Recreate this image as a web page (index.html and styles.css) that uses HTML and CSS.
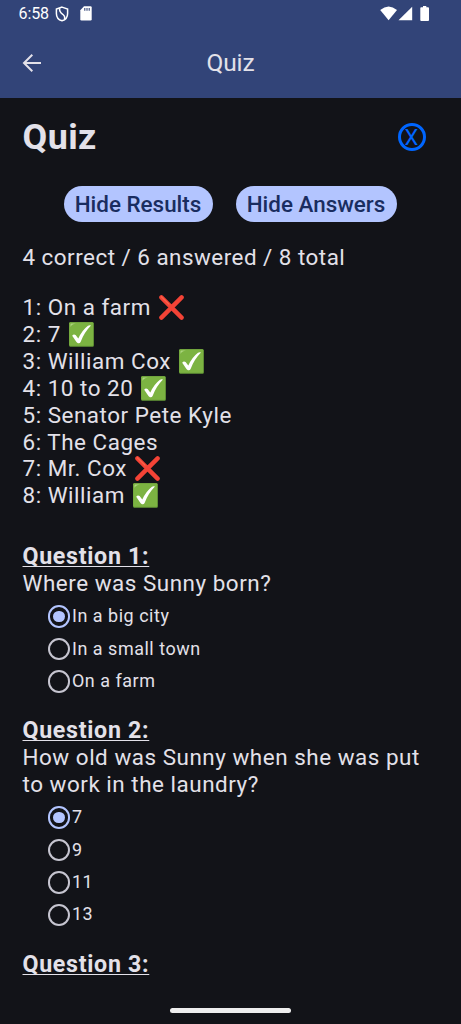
FILE: index.html
```html
<!DOCTYPE html>
<html lang="en">
<head>
<meta charset="utf-8">
<title>Quiz</title>
<link rel="stylesheet" href="styles.css">
</head>
<body>
<svg class="defs" width="0" height="0" aria-hidden="true">
  <symbol id="cross" viewBox="0 0 25 25"><path d="M2.4 2.4 22.6 22.6M22.6 2.4 2.4 22.6" stroke="#f44336" stroke-width="4.4" stroke-linecap="round"/><path d="M2.3 1.8 10 9.3" stroke="#ff7555" stroke-width="1" stroke-linecap="round"/></symbol>
  <symbol id="check" viewBox="0 0 25 25"><rect x=".2" y=".2" width="24.6" height="24.6" rx="1.2" fill="#689f38"/><rect x=".2" y=".2" width="24" height="23.6" rx="1.2" fill="#7cb342"/><path d="M1.5 5V2.5Q1.5 1.5 2.5 1.5H7Q2.5 2 1.5 5Z" fill="#aed581"/><path d="M3.2 13.8Q4.6 11.6 6.6 13L9.3 16.5Q13 8.2 19 3.7Q20.5 2.8 22 3.5Q15 10.5 11.6 20Q10.8 21.6 9 21.2Q7.8 21 7.1 19.6Z" fill="#fff"/></symbol>
</svg>
<header class="header">
  <div class="status">
    <span class="time">6:58</span>
    <svg class="shield" viewBox="0 0 14 16" fill="none" stroke="#fff" stroke-width="1.5"><path d="M7 1.1 12.6 3V7.4C12.6 11 10.4 13.8 7 14.8C3.6 13.8 1.4 11 1.4 7.4V3Z"/><path d="M4.8 2.2C3.7 5.5 6 7 8 8.5S10.2 11 9.6 13.4"/></svg>
    <svg class="sd" viewBox="0 0 12 15"><path d="M4 .3H10.5Q11.7.3 11.7 1.5V13.3Q11.7 14.5 10.5 14.5H1.5Q.3 14.5.3 13.3V4.2Z" fill="#fff"/><path d="M4.8 2.1V4.8M7 2.1V4.8M9.2 2.1V4.8" stroke="#324478" stroke-width="1.1"/></svg>
    <svg class="signals" viewBox="0 0 50 16" fill="#fff"><path d="M.2 4Q8.6-3.2 17 4L8.6 14.2Z"/><path d="M18.5 14.2 32.2.7V14.2Z"/><path d="M43 0H46.3V1.2H48.1Q49 1.2 49 2.2V14Q49 15 48.1 15H41.2Q40.3 15 40.3 14V2.2Q40.3 1.2 41.2 1.2H43Z"/></svg>
  </div>
  <div class="bar">
    <svg class="back" viewBox="0 0 20 20" fill="none" stroke="#e3e1e9" stroke-width="2"><path d="M19 10H2.2M10.3 1.8 2 10 10.3 18.2"/></svg>
    <span class="bar-title">Quiz</span>
  </div>
</header>
<main class="content">
  <div class="title-row">
    <h1 class="title">Quiz</h1>
    <span class="close">X</span>
  </div>
  <div class="actions"><button class="pill">Hide Results</button><button class="pill answers">Hide Answers</button></div>
  <p class="score">4 correct / 6 answered / 8 total</p>
  <div class="results">
    <div>1: On a farm <svg class="mark"><use href="#cross"/></svg></div>
    <div>2: 7 <svg class="mark"><use href="#check"/></svg></div>
    <div>3: William Cox <svg class="mark"><use href="#check"/></svg></div>
    <div>4: 10 to 20 <svg class="mark"><use href="#check"/></svg></div>
    <div>5: Senator Pete Kyle</div>
    <div>6: The Cages</div>
    <div>7: Mr. Cox <svg class="mark"><use href="#cross"/></svg></div>
    <div>8: William <svg class="mark"><use href="#check"/></svg></div>
  </div>
  <section class="question">
    <h2 class="q-title">Question 1:</h2>
    <p class="q-text">Where was Sunny born?</p>
    <div class="options">
      <div class="option"><i class="radio on"></i>In a big city</div>
      <div class="option"><i class="radio"></i>In a small town</div>
      <div class="option"><i class="radio"></i>On a farm</div>
    </div>
  </section>
  <section class="question">
    <h2 class="q-title">Question 2:</h2>
    <p class="q-text">How old was Sunny when she was put<br>to work in the laundry?</p>
    <div class="options">
      <div class="option"><i class="radio on"></i>7</div>
      <div class="option"><i class="radio"></i>9</div>
      <div class="option"><i class="radio"></i>11</div>
      <div class="option"><i class="radio"></i>13</div>
    </div>
  </section>
  <section class="question">
    <h2 class="q-title">Question 3:</h2>
  </section>
</main>
<div class="home"></div>
</body>
</html>
```
FILE: styles.css
```css
* { box-sizing: border-box; margin: 0; padding: 0; }
body {
  position: relative;
  width: 461px;
  height: 1024px;
  overflow: hidden;
  background: #121318;
  color: #e3e1e9;
  font: 22.43px/26.9px Roboto, sans-serif;
  letter-spacing: 0.53px;
}
.defs { position: absolute; }
.header { height: 98px; background: #324478; }
.status {
  display: flex;
  align-items: center;
  height: 27px;
  padding: 0 31px 0 18.5px;
  color: #fff;
}
.time { width: 36px; padding-top: 1px; font-size: 16px; letter-spacing: -0.1px; }
.shield { width: 14px; height: 16px; }
.sd { width: 12px; height: 15px; margin-left: 11.5px; }
.signals { width: 50px; height: 16px; margin-left: auto; }
.bar {
  display: grid;
  grid-template-columns: 1fr auto 1fr;
  align-items: center;
  height: 71px;
  padding: 0 22px;
}
.back { width: 20px; height: 20px; }
.bar-title { padding-top: 2px; font-size: 24.5px; letter-spacing: -0.1px; }
.content { padding: 0 22.5px; }
.title-row {
  display: flex;
  justify-content: space-between;
  align-items: center;
  height: 77px;
  padding-right: 13px;
}
.title { padding-top: 2px; font-size: 35.9px; line-height: 43px; letter-spacing: 0.4px; }
.close {
  width: 28px;
  height: 28px;
  margin-top: 1px;
  border: 3px solid #0066ff;
  border-radius: 50%;
  color: #0066ff;
  font-size: 22px;
  line-height: 23px;
  letter-spacing: 0;
  text-align: center;
}
.actions { display: flex; justify-content: center; gap: 22.5px; padding-top: 11px; }
.pill {
  width: 149.5px;
  height: 36px;
  padding-right: 1px;
  border: 0;
  border-radius: 18px;
  background: #b3c5ff;
  color: #1a2d60;
  font: 500 22.43px/35px Roboto, sans-serif;
}
.answers { width: 161.5px; }
.score { margin-top: 22px; letter-spacing: 0.48px; }
.results { margin: 23.2px 0 34.2px; }
.results div { height: 26.9px; white-space: nowrap; }
.mark { width: 25px; height: 25px; margin: -4px 0 -4px 2px; vertical-align: -1px; }
.question { margin-bottom: 20px; }
.q-title {
  width: max-content;
  font-size: 23.2px;
  line-height: 26.9px;
  letter-spacing: 0.7px;
  text-decoration: underline;
  text-decoration-thickness: 1px;
  text-underline-offset: 2px;
  text-decoration-skip-ink: none;
}
.options { padding: 3px 0 0 25px; }
.option {
  display: flex;
  align-items: center;
  gap: 2px;
  height: 32.4px;
  padding-top: 0.6px;
  font-size: 17.95px;
  letter-spacing: 0.53px;
}
.radio {
  display: grid;
  place-items: center;
  width: 22.5px;
  height: 22.5px;
  border: 2px solid #c6c5d0;
  border-radius: 50%;
}
.on { border-color: #b3c5ff; }
.on::before {
  content: "";
  width: 11.5px;
  height: 11.5px;
  border-radius: 50%;
  background: #b3c5ff;
}
.home {
  position: absolute;
  left: 170px;
  top: 1008px;
  width: 121px;
  height: 5px;
  border-radius: 3px;
  background: #eee;
}
```
